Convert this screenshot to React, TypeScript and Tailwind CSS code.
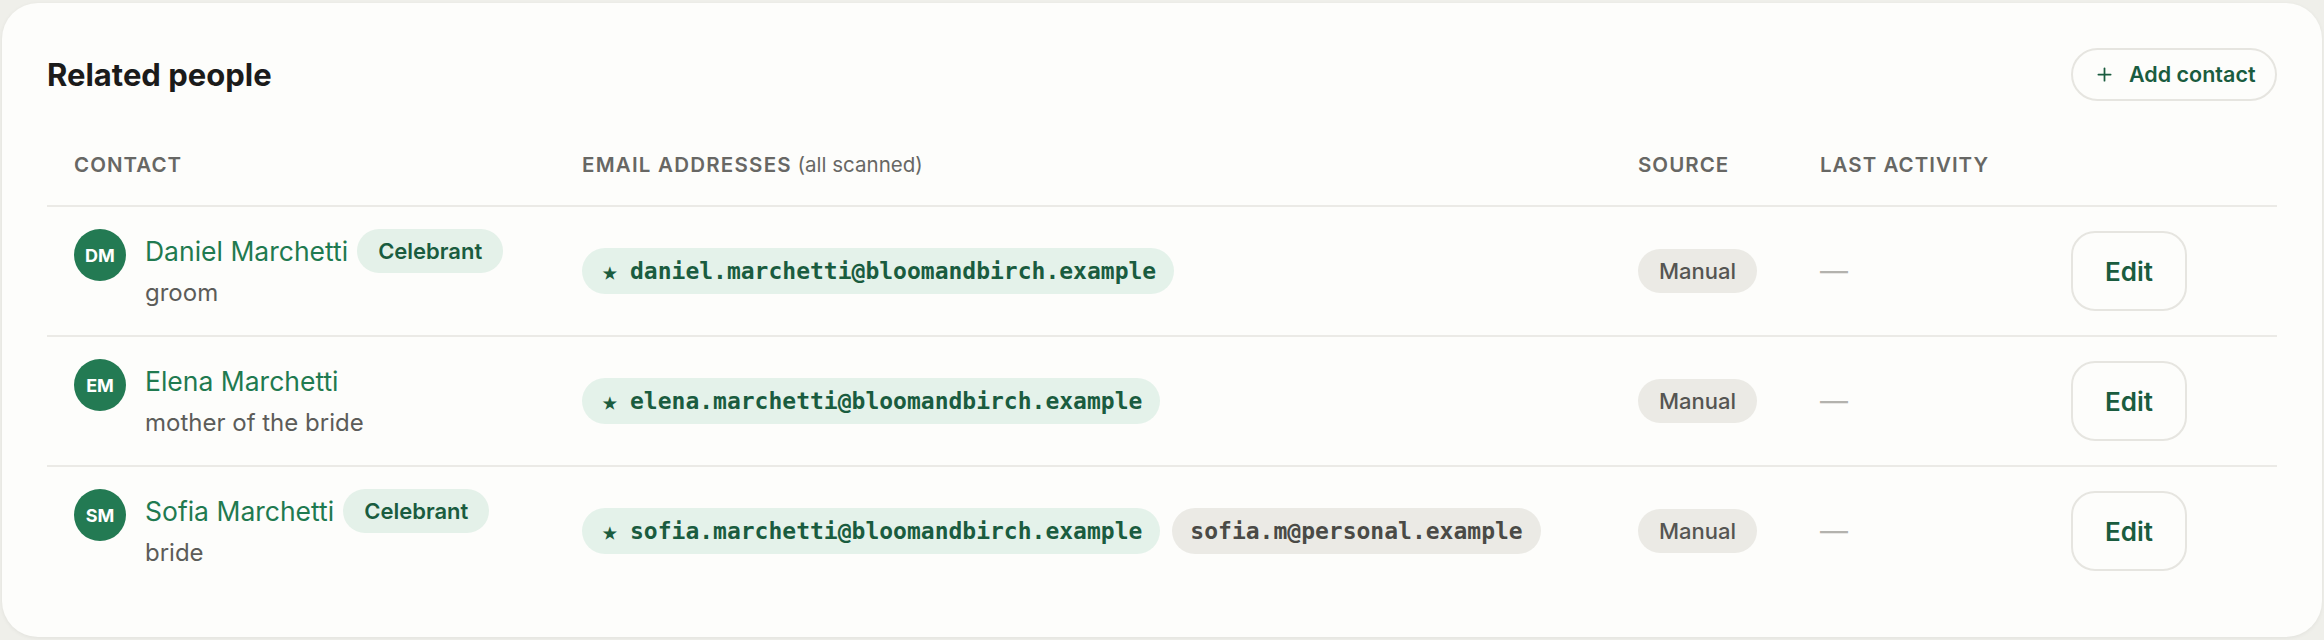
import { Plus } from "lucide-react";

type Person = {
  initials: string;
  name: string;
  role: string;
  celebrant: boolean;
  emails: { address: string; primary: boolean }[];
  source: string;
};

const people: Person[] = [
  {
    initials: "DM",
    name: "Daniel Marchetti",
    role: "groom",
    celebrant: true,
    emails: [{ address: "daniel.marchetti@bloomandbirch.example", primary: true }],
    source: "Manual",
  },
  {
    initials: "EM",
    name: "Elena Marchetti",
    role: "mother of the bride",
    celebrant: false,
    emails: [{ address: "elena.marchetti@bloomandbirch.example", primary: true }],
    source: "Manual",
  },
  {
    initials: "SM",
    name: "Sofia Marchetti",
    role: "bride",
    celebrant: true,
    emails: [
      { address: "sofia.marchetti@bloomandbirch.example", primary: true },
      { address: "sofia.m@personal.example", primary: false },
    ],
    source: "Manual",
  },
];

const cols = "grid grid-cols-[508px_1056px_182px_251px_234px]";

export default function App() {
  return (
    <div className="min-h-screen bg-[#efefea] px-[2px] pt-[3px] pb-[3px] font-['Inter',sans-serif]">
      <div className="rounded-[36px] bg-[#fdfdfb] px-[45px] pt-[45px] pb-[42px] shadow-[0_1px_4px_rgba(0,0,0,0.06)]">
        <div className="flex h-[53px] items-center justify-between">
          <h2 className="text-[31px] font-bold leading-[36px] text-[#1b1b1a]">Related people</h2>
          <button className="flex h-[53px] w-[206px] items-center gap-[14px] rounded-full border-2 border-[#e6e5e0] pl-[21px] text-[21.5px] font-semibold text-[#1a5c3f]">
            <Plus size={21} strokeWidth={2} />
            Add contact
          </button>
        </div>

        <div className="mt-[24px]">
          <div className={`${cols} border-b-2 border-[#ebeae6]`}>
            <div className="px-[27px] py-[28px] text-[20.5px] font-semibold uppercase leading-[24px] tracking-[0.05em] text-[#676764]">
              Contact
            </div>
            <div className="px-[27px] py-[28px] text-[20.5px] leading-[24px] text-[#676764]">
              <span className="font-semibold uppercase tracking-[0.06em]">Email addresses</span>{" "}
              <span className="font-normal">(all scanned)</span>
            </div>
            <div className="px-[27px] py-[28px] text-[20.5px] font-semibold uppercase leading-[24px] tracking-[0.05em] text-[#676764]">
              Source
            </div>
            <div className="px-[27px] py-[28px] text-[20.5px] font-semibold uppercase leading-[24px] tracking-[0.05em] text-[#676764]">
              Last activity
            </div>
            <div />
          </div>

          {people.map((p, i) => (
            <div
              key={p.name}
              className={`${cols} items-center ${i < people.length - 1 ? "border-b-2 border-[#ebeae6]" : ""}`}
            >
              <div className="flex items-start gap-[19px] px-[27px] pt-[22px] pb-[26px]">
                <div className="flex h-[52px] w-[52px] shrink-0 items-center justify-center rounded-full bg-[#237a53] text-[18px] font-bold text-white">
                  {p.initials}
                </div>
                <div className="flex flex-col">
                  <div className="flex h-[44px] items-center gap-[9px]">
                    <span className="text-[26.5px] leading-[32px] text-[#1f7a50]">{p.name}</span>
                    {p.celebrant && (
                      <span className="rounded-full bg-[#e4f1e9] px-[21px] py-[8px] text-[22px] font-semibold leading-[28px] text-[#1a5c3f]">
                        Celebrant
                      </span>
                    )}
                  </div>
                  <div className="mt-[4px] text-[24px] leading-[32px] text-[#5c5c59]">{p.role}</div>
                </div>
              </div>

              <div className="flex items-center gap-[12px] px-[27px]">
                {p.emails.map((e) => (
                  <span
                    key={e.address}
                    className={`flex items-center rounded-full px-[18px] py-[9px] font-['DejaVu_Sans_Mono',monospace] text-[23px] font-bold leading-[28px] ${
                      e.primary ? "bg-[#e4f2ea] text-[#1a5c3f]" : "bg-[#ebeae5] text-[#4a4a46]"
                    }`}
                  >
                    {e.primary && (
                      <span className="mr-[13px] ml-[2px] inline-block w-[15px] text-center text-[26px] leading-[28px]">★</span>
                    )}
                    {e.address}
                  </span>
                ))}
              </div>

              <div className="px-[27px]">
                <span className="inline-block rounded-full bg-[#ebeae5] px-[21px] py-[8px] text-[22px] font-medium leading-[28px] text-[#555552]">
                  {p.source}
                </span>
              </div>

              <div className="px-[27px] text-[28px] leading-[32px] text-[#b3b2ad]">—</div>

              <div className="px-[27px]">
                <button className="h-[80px] w-[116px] rounded-[24px] border-2 border-[#e6e5e0] text-[26px] font-semibold text-[#1a5c3f]">
                  Edit
                </button>
              </div>
            </div>
          ))}
        </div>
      </div>
    </div>
  );
}
